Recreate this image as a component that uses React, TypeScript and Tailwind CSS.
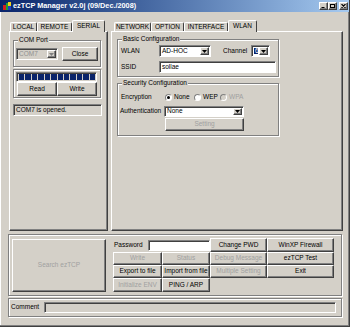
import React from 'react';

// Win2000-style bevels
const raised = 'border border-t-white border-l-white border-r-[#404040] border-b-[#404040] shadow-[inset_-1px_-1px_0_#808080]';
const sunken = 'border border-t-[#808080] border-l-[#808080] border-r-white border-b-white shadow-[inset_1px_1px_0_#404040]';
const etched = 'border border-[#808080] shadow-[1px_1px_0_#fff,inset_1px_1px_0_#fff]';
const dim = 'text-[#a0a0a0]';

function Button({ label, disabled, className = '' }: { label: string; disabled?: boolean; className?: string }) {
  return (
    <div className={`${raised} flex items-center justify-center whitespace-nowrap ${disabled ? dim : 'text-black'} ${className}`}>
      {label}
    </div>
  );
}

function Arrow({ disabled }: { disabled?: boolean }) {
  return (
    <svg width="5" height="3" viewBox="0 0 5 3">
      <path d="M0 0h5L2.5 3z" fill={disabled ? '#808080' : '#000'} />
    </svg>
  );
}

function Combo({ value, className = '', disabled, selected }: { value: string; className?: string; disabled?: boolean; selected?: boolean }) {
  return (
    <div className={`${sunken} flex items-stretch ${disabled ? 'bg-[#d4d0c8]' : 'bg-white'} ${className}`}>
      <div className="flex-1 flex items-center pl-[2px] overflow-hidden">
        <span className={selected ? 'bg-[#0a246a] text-white px-[1px]' : disabled ? 'text-[#909090]' : ''}>{value}</span>
      </div>
      <div className={`${raised} w-[9px] bg-[#d4d0c8] flex items-center justify-center m-[1px]`}>
        <Arrow disabled={disabled} />
      </div>
    </div>
  );
}

function Group({ label, className = '', children }: { label?: string; className?: string; children?: React.ReactNode }) {
  return (
    <div className={`relative ${etched} ${className}`}>
      {label && (
        <span className="absolute left-[4px] top-[-5px] px-[1px] bg-[#d4d0c8] leading-[8px] whitespace-nowrap">{label}</span>
      )}
      {children}
    </div>
  );
}

function Radio({ checked, disabled }: { checked?: boolean; disabled?: boolean }) {
  return (
    <span
      className={`w-[7px] h-[7px] shrink-0 rounded-full border border-t-[#808080] border-l-[#808080] border-r-white border-b-white ${
        disabled ? 'bg-[#d4d0c8]' : 'bg-white'
      } flex items-center justify-center`}
    >
      {checked && <span className="w-[3px] h-[3px] rounded-full bg-black" />}
    </span>
  );
}

function Tab({ label, className = '', selected }: { label: string; className?: string; selected?: boolean }) {
  if (selected) {
    return (
      <div
        className={`relative z-10 h-[12px] -mb-[1px] pb-[1px] bg-[#d4d0c8] border-t border-l border-r border-t-white border-l-white border-r-[#404040] rounded-t-[2px] flex items-center justify-center ${className}`}
      >
        {label}
      </div>
    );
  }
  return (
    <div
      className={`h-[9px] border-t border-l border-r border-t-white border-l-white border-r-[#404040] rounded-t-[2px] flex items-center justify-center ${className}`}
    >
      {label}
    </div>
  );
}

function AppIcon() {
  return (
    <svg width="8" height="8" viewBox="0 0 8 8">
      <rect x="0" y="3" width="3" height="5" fill="#d02020" />
      <rect x="3" y="1" width="2" height="7" fill="#20a030" />
      <rect x="5" y="0" width="3" height="4" fill="#f0d020" />
      <rect x="5" y="4" width="3" height="4" fill="#2040c0" />
    </svg>
  );
}

function CaptionButton({ kind }: { kind: 'min' | 'max' | 'close' }) {
  return (
    <div className={`${raised} w-[9px] h-[8px] bg-[#d4d0c8] flex items-center justify-center`}>
      <svg width="5" height="4" viewBox="0 0 5 4">
        {kind === 'min' && <rect x="0.5" y="3" width="3" height="1" fill="#000" />}
        {kind === 'max' && <rect x="0.5" y="0.5" width="4" height="3" fill="none" stroke="#000" strokeWidth="1" />}
        {kind === 'close' && <path d="M0.5 0L4.5 4M4.5 0L0.5 4" stroke="#000" strokeWidth="1.1" />}
      </svg>
    </div>
  );
}

export default function App() {
  return (
    <div className="w-[350px] h-[327px] overflow-hidden bg-[#d4d0c8] font-['Liberation_Sans',Arial,sans-serif] text-[6.5px] leading-none text-black border-r border-b border-r-[#404040] border-b-[#404040] shadow-[inset_-1px_-1px_0_#808080,inset_1px_0_0_#fff]">
      {/* title bar */}
      <div className="h-[12px] flex items-center bg-linear-to-r from-[#0a246a] to-[#a6caf0] pl-[3px] pr-[1px]">
        <AppIcon />
        <span className="ml-[2px] text-white font-bold text-[7.3px] whitespace-nowrap">ezTCP Manager v2.0j (09/Dec./2008)</span>
        <div className="ml-auto flex items-center">
          <CaptionButton kind="min" />
          <CaptionButton kind="max" />
          <div className="w-[2px]" />
          <CaptionButton kind="close" />
        </div>
      </div>

      {/* tab panels */}
      <div className="flex mt-[8px] ml-[9px] gap-[3px]">
        <div className="w-[99px] flex flex-col">
          <div className="flex items-end h-[11px] pl-[1px]">
            <Tab label="LOCAL" className="w-[27px]" />
            <Tab label="REMOTE" className="w-[35px]" />
            <Tab label="SERIAL" className="w-[33px]" selected />
          </div>
          <div className={`${raised} h-[200px] flex flex-col pl-[3px]`}>
            <Group label="COM Port" className="mt-[8px] w-[88px] h-[27px] flex items-start pl-[2px] pt-[6px]">
              <Combo value="COM7" disabled className="mt-[1px] w-[42px] h-[12px]" />
              <Button label="Close" className="ml-[4px] w-[36px] h-[14px]" />
            </Group>
            <Group className="mt-[2px] w-[88px] h-[29px] flex flex-col pl-[2px] pt-[2px]">
              <div className={`${sunken} w-[81px] h-[10px] flex gap-[1px] py-[1px] pl-[2px] pr-[1px]`}>
                {Array.from({ length: 12 }).map((_, i) => (
                  <div key={i} className="flex-1 bg-[#0a246a]" />
                ))}
              </div>
              <div className="flex pl-[1px]">
                <Button label="Read" className="w-[40px] h-[14px]" />
                <Button label="Write" className="w-[40px] h-[14px]" />
              </div>
            </Group>
            <div className={`${sunken} mt-[6px] w-[89px] h-[12px] flex items-center pl-[2px]`}>COM7 is opened.</div>
          </div>
        </div>

        <div className="w-[232px] flex flex-col">
          <div className="flex items-end h-[11px] pl-[3px]">
            <Tab label="NETWORK" className="w-[37px]" />
            <Tab label="OPTION" className="w-[33px]" />
            <Tab label="INTERFACE" className="w-[44px]" />
            <Tab label="WLAN" className="w-[29px]" selected />
          </div>
          <div className={`${raised} h-[200px] flex flex-col pl-[5px]`}>
            <Group label="Basic Configuration" className="mt-[7px] w-[162px] h-[38px] pt-[5px] pl-[3px] flex flex-col gap-[4px]">
              <div className="flex items-center h-[12px]">
                <span className="w-[38px]">WLAN</span>
                <Combo value="AD-HOC" className="w-[52px] h-[12px]" />
                <span className="ml-[12px] w-[28px]">Channel</span>
                <Combo value="6" selected className="w-[19px] h-[12px]" />
              </div>
              <div className="flex items-center h-[12px]">
                <span className="w-[38px]">SSID</span>
                <div className={`${sunken} bg-white w-[117px] h-[12px] flex items-center pl-[2px]`}>sollae</div>
              </div>
            </Group>
            <Group label="Security Configuration" className="mt-[6px] w-[162px] h-[53px] pt-[9px] flex flex-col">
              <div className="flex items-center h-[8px] pl-[3px]">
                <span className="w-[44px]">Encryption</span>
                <span className="w-[29px] flex items-center gap-[2px]">
                  <Radio checked />
                  None
                </span>
                <span className="w-[26px] flex items-center gap-[2px]">
                  <Radio />
                  WEP
                </span>
                <span className={`flex items-center gap-[2px] ${dim}`}>
                  <Radio disabled />
                  WPA
                </span>
              </div>
              <div className="flex items-center mt-[5px] pl-[2px]">
                <span className="w-[44px]">Authentication</span>
                <Combo value="None" className="w-[80px] h-[11px]" />
              </div>
              <Button label="Setting" disabled className="mt-[1px] ml-[47px] w-[79px] h-[13px]" />
            </Group>
          </div>
        </div>
      </div>

      {/* search / tools */}
      <Group className="ml-[8px] mt-[3px] w-[334px] h-[62px] flex items-start pl-[3px] pt-[3px]">
        <Button label="Search ezTCP" disabled className="mt-[1px] w-[94px] h-[53px]" />
        <div className="ml-[7px] grid grid-cols-[49px_48px_57px_67px] grid-rows-[14px_13px_13px_14px]">
          <div className="col-span-2 flex items-center">
            <span className="w-[35px] pl-[1px]">Password</span>
            <div className={`${sunken} bg-white w-[62px] h-[11px]`} />
          </div>
          <Button label="Change PWD" />
          <Button label="WinXP Firewall" />
          <Button label="Write" disabled />
          <Button label="Status" disabled />
          <Button label="Debug Message" disabled />
          <Button label="ezTCP Test" />
          <Button label="Export to file" />
          <Button label="Import from file" />
          <Button label="Multiple Setting" disabled />
          <Button label="Exit" />
          <Button label="Initialize ENV" disabled />
          <Button label="PING / ARP" />
        </div>
      </Group>

      {/* comment */}
      <Group className="ml-[8px] mt-[2px] w-[334px] h-[19px] flex items-center pl-[2px]">
        <span className="w-[33px]">Comment</span>
        <div className={`${sunken} w-[292px] h-[11px]`} />
      </Group>
    </div>
  );
}
